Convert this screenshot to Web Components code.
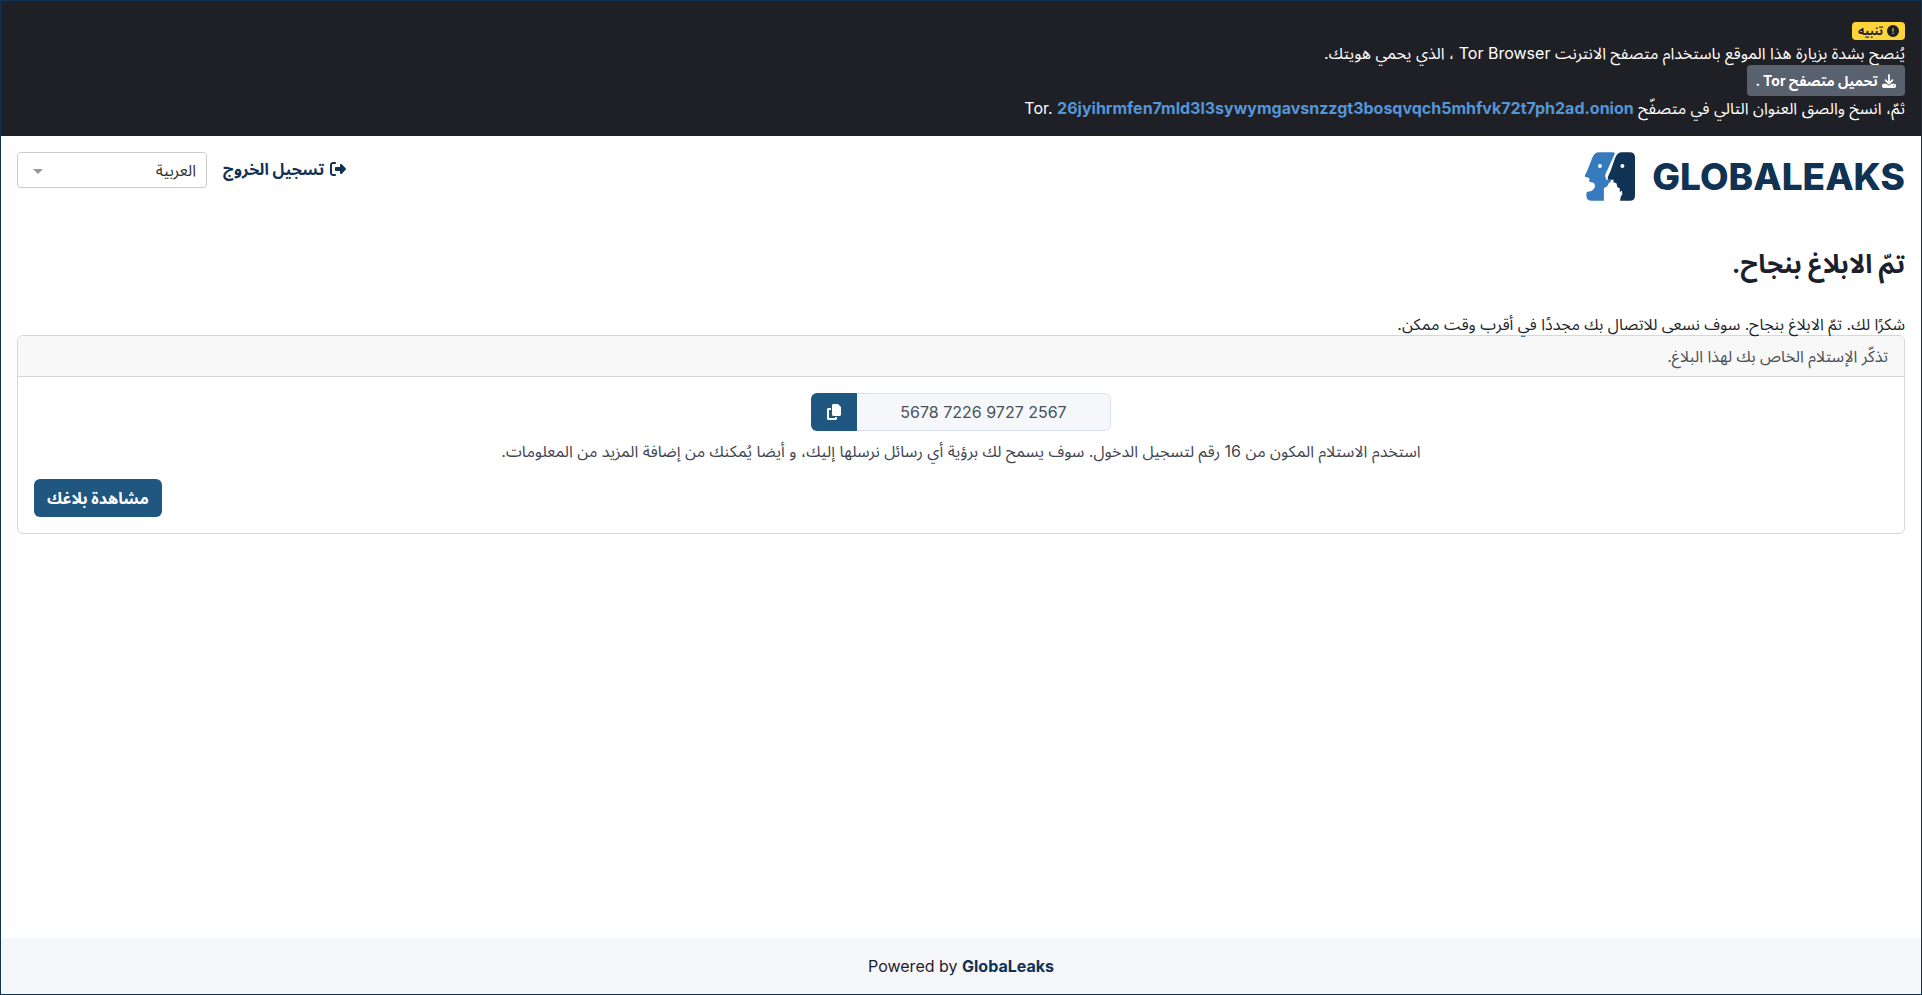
<!DOCTYPE html>
<html lang="ar" dir="rtl">
<head>
<meta charset="utf-8">
<meta name="viewport" content="width=device-width, initial-scale=1">
<title>GlobaLeaks</title>
<style>
  html, body { margin: 0; }
  body {
    font-family: Inter, "Noto Sans Arabic", "Noto Sans", sans-serif;
    font-size: 16px;
    line-height: 24px;
    color: #1d1f2a;
    background: #fff;
    --navy: #103253;
    --primary: #205781;
  }
</style>
</head>
<body>
<gl-app></gl-app>
<script>
const define = (name, html, setup) => {
  const template = document.createElement('template');
  template.innerHTML = html;
  customElements.define(name, class extends HTMLElement {
    constructor() {
      super();
      const root = this.attachShadow({ mode: 'open' });
      root.append(template.content.cloneNode(true));
      if (setup) setup(this, root);
    }
  });
};

const ICONS = {
  alert: [512, 'M256 512A256 256 0 1 0 256 0a256 256 0 1 0 0 512zm0-384c13.3 0 24 10.7 24 24V264c0 13.3-10.7 24-24 24s-24-10.7-24-24V152c0-13.3 10.7-24 24-24zM224 352a32 32 0 1 1 64 0 32 32 0 1 1 -64 0z'],
  download: [512, 'M288 32c0-17.7-14.3-32-32-32s-32 14.3-32 32V274.7l-73.4-73.4c-12.5-12.5-32.8-12.5-45.3 0s-12.5 32.8 0 45.3l128 128c12.5 12.5 32.8 12.5 45.3 0l128-128c12.5-12.5 12.5-32.8 0-45.3s-32.8-12.5-45.3 0L288 274.7V32zM64 352c-35.3 0-64 28.7-64 64v32c0 35.3 28.7 64 64 64H448c35.3 0 64-28.7 64-64V416c0-35.3-28.7-64-64-64H346.5l-45.3 45.3c-25 25-65.5 25-90.5 0L165.5 352H64zm368 56a24 24 0 1 1 0 48 24 24 0 1 1 0-48z'],
  logout: [512, 'M377.9 105.9L500.7 228.7c7.2 7.2 11.3 17.1 11.3 27.3s-4.1 20.1-11.3 27.3L377.9 406.1c-6.4 6.4-15 9.9-24 9.9c-18.7 0-33.9-15.2-33.9-33.9l0-62.1-128 0c-17.7 0-32-14.3-32-32l0-64c0-17.7 14.3-32 32-32l128 0 0-62.1c0-18.7 15.2-33.9 33.9-33.9c9 0 17.6 3.6 24 9.9zM160 96L96 96c-17.7 0-32 14.3-32 32l0 256c0 17.7 14.3 32 32 32l64 0c17.7 0 32 14.3 32 32s-14.3 32-32 32l-64 0c-53 0-96-43-96-96L0 128C0 75 43 32 96 32l64 0c17.7 0 32 14.3 32 32s-14.3 32-32 32z'],
  copy: [448, 'M208 0H332.1c12.7 0 24.9 5.1 33.9 14.1l67.9 67.9c9 9 14.1 21.2 14.1 33.9V336c0 26.5-21.5 48-48 48H208c-26.5 0-48-21.5-48-48V48c0-26.5 21.5-48 48-48zM48 128h80v64H64V448H256V416h64v48c0 26.5-21.5 48-48 48H48c-26.5 0-48-21.5-48-48V176c0-26.5 21.5-48 48-48z']
};

define('gl-icon', `
  <style>
    :host { display: inline-block; height: 1em; line-height: 1; vertical-align: -2px; }
    svg { display: block; height: 1em; fill: currentColor; }
  </style>
  <svg aria-hidden="true"><path/></svg>`,
  (host, root) => {
    const [width, path] = ICONS[host.getAttribute('name')];
    root.querySelector('svg').setAttribute('viewBox', `0 0 ${width} 512`);
    root.querySelector('path').setAttribute('d', path);
  });

define('gl-badge', `
  <style>
    :host { display: inline-block; padding: 3px 6px; border-radius: 4px; background: #ffd43b;
            color: #1d1f2a; font-size: 12px; font-weight: 700; line-height: 12px; }
  </style><slot></slot>`);

define('gl-tor-banner', `
  <style>
    :host { display: block; padding: 16px; background: #1f2025; color: #fff; }
    gl-badge gl-icon { margin-inline-end: 1px; }
    .download { display: inline-block; box-sizing: border-box; height: 31px; padding: 5px 9px 5px 9px;
                border-radius: 4px; background: #5a616e; color: #fff; font-size: 14px; line-height: 21px;
                font-weight: 700; text-decoration: none; vertical-align: top; }
    .download gl-icon { margin-inline-end: 1px; }
    .onion { color: #5596d8; font-weight: 700; text-decoration: none; }
  </style>
  <div><gl-badge><gl-icon name="alert"></gl-icon> تنبيه</gl-badge></div>
  <div>يُنصح بشدة بزيارة هذا الموقع باستخدام متصفح الانترنت Tor Browser ، الذي يحمي هويتك.</div>
  <div><a class="download" href="#tor"><gl-icon name="download"></gl-icon> تحميل متصفح Tor .</a></div>
  <div><span>ثمّ، انسخ والصق العنوان التالي في متصفّح </span><span>Tor. </span><a class="onion" href="#onion">26jyihrmfen7mld3l3sywymgavsnzzgt3bosqvqch5mhfvk72t7ph2ad.onion</a></div>`);

define('gl-logo', `
  <style>
    :host { display: flex; direction: ltr; align-items: center; gap: 17px; height: 49px; color: var(--navy); }
    svg { display: block; width: 50px; height: 49px; }
    span { font: 800 37px/49px Inter, sans-serif; }
  </style>
  <svg viewBox="5 6 151 147" aria-hidden="true">
    <path fill="#377bbf" d="M47 6H89Q97 6 94 13L67 72Q64 82 69 84L68 89H84L82 96L76 101L73 108L62 115V153H26Q9 153 9 137L10 126L24 123Q36 117 35 106Q34 98 25 97L18 95V84L5 80V76L13 59L27 23Q33 6 47 6Z"/>
    <path fill="#103253" d="M113 6H140Q156 6 156 22V137Q156 153 140 153H111L113 140L118 133L116 122L110 127V115L103 112L100 100L91 97V89H74V81L83 61L95 26Q101 8 113 6Z"/>
    <circle cx="50" cy="48" r="6" fill="#fff"/><circle cx="118" cy="48" r="6" fill="#fff"/>
  </svg>
  <span>GLOBALEAKS</span>`);

define('gl-language', `
  <style>
    :host { display: block; position: relative; width: 190px; height: 36px; }
    select { appearance: none; box-sizing: border-box; width: 100%; height: 100%; margin: 0; padding: 0 10px;
             border: 1px solid #ccc; border-radius: 4px; background: #fff; color: #333; font: inherit; }
    :host::after { content: ""; position: absolute; left: 16px; top: 17px; pointer-events: none;
                   border: 5px solid transparent; border-top-color: #999; border-bottom: 0; }
  </style>
  <select aria-label="اللغة"><option>العربية</option></select>`);

define('gl-header', `
  <style>
    :host { display: flex; justify-content: space-between; align-items: flex-start; padding: 16px; }
    .tools { display: flex; gap: 16px; }
    .logout { height: 34px; line-height: 34px; color: var(--navy); font-weight: 700; text-decoration: none; }
    .logout gl-icon { margin-inline-end: 2px; }
  </style>
  <gl-logo></gl-logo>
  <div class="tools">
    <a class="logout" href="#logout"><gl-icon name="logout"></gl-icon> تسجيل الخروج</a>
    <gl-language></gl-language>
  </div>`);

define('gl-receipt', `
  <style>
    :host { display: flex; direction: rtl; width: 300px; height: 38px; margin: 0 auto; }
    input { flex: 1; min-width: 0; box-sizing: border-box; margin: 0; padding: 0 12px; border: 1px solid #dce1ee; border-left: 0;
            border-radius: 0 6px 6px 0; background: #f5f7fb; color: #495057; font: inherit; text-align: center; }
    button { width: 46px; margin: 0; padding: 0; border: 0; border-radius: 6px 0 0 6px;
             background: var(--primary); color: #fff; font: inherit; }
  </style>
  <input dir="ltr" readonly aria-label="الإيصال" value="5678 7226 9727 2567">
  <button type="button" aria-label="نسخ"><gl-icon name="copy"></gl-icon></button>`);

define('gl-card', `
  <style>
    :host { display: block; border: 1px solid #d5d6d7; border-radius: 6px; color: #3f4652; overflow: hidden; }
    header { padding: 8px 16px; border-bottom: 1px solid #d5d6d7; background: #f8f8f8; color: #495057; }
    .body { padding: 16px; }
  </style>
  <header><slot name="title"></slot></header>
  <div class="body"><slot></slot></div>`);

define('gl-success', `
  <style>
    :host { display: block; padding: 30px 16px 16px; }
    h1 { margin: 0 0 32px; font-size: 26px; line-height: 34px; font-weight: 700; }
    .intro { margin: 0; line-height: 22px; }
    .help { margin: 8px 0 16px; text-align: center; }
    .actions { display: flex; justify-content: flex-end; }
    .actions button { height: 38px; margin: 0; padding: 0 13px; border: 0; border-radius: 6px;
                      background: var(--primary); color: #fff; font: inherit; font-weight: 700; }
  </style>
  <h1>تمّ الابلاغ بنجاح.</h1>
  <p class="intro">شكرًا لك. تمّ الابلاغ بنجاح. سوف نسعى للاتصال بك مجددًا في أقرب وقت ممكن.</p>
  <gl-card>
    <span slot="title">تذكّر الإستلام الخاص بك لهذا البلاغ.</span>
    <gl-receipt></gl-receipt>
    <p class="help">استخدم الاستلام المكون من 16 رقم لتسجيل الدخول. سوف يسمح لك برؤية أي رسائل نرسلها إليك، و أيضا يُمكنك من إضافة المزيد من المعلومات.</p>
    <div class="actions"><button type="button">مشاهدة بلاغك</button></div>
  </gl-card>`);

define('gl-footer', `
  <style>
    :host { display: block; direction: ltr; padding: 16px; background: #f5f7fb; text-align: center; }
    a { color: var(--navy); font-weight: 700; text-decoration: none; }
  </style>
  Powered by <a href="#globaleaks">GlobaLeaks</a>`);

define('gl-app', `
  <style>
    :host { display: flex; flex-direction: column; box-sizing: border-box; min-height: 100vh; border: 1px solid var(--navy); }
    gl-success { flex: 1; }
  </style>
  <gl-tor-banner></gl-tor-banner>
  <gl-header></gl-header>
  <gl-success></gl-success>
  <gl-footer></gl-footer>`);
</script>
</body>
</html>
